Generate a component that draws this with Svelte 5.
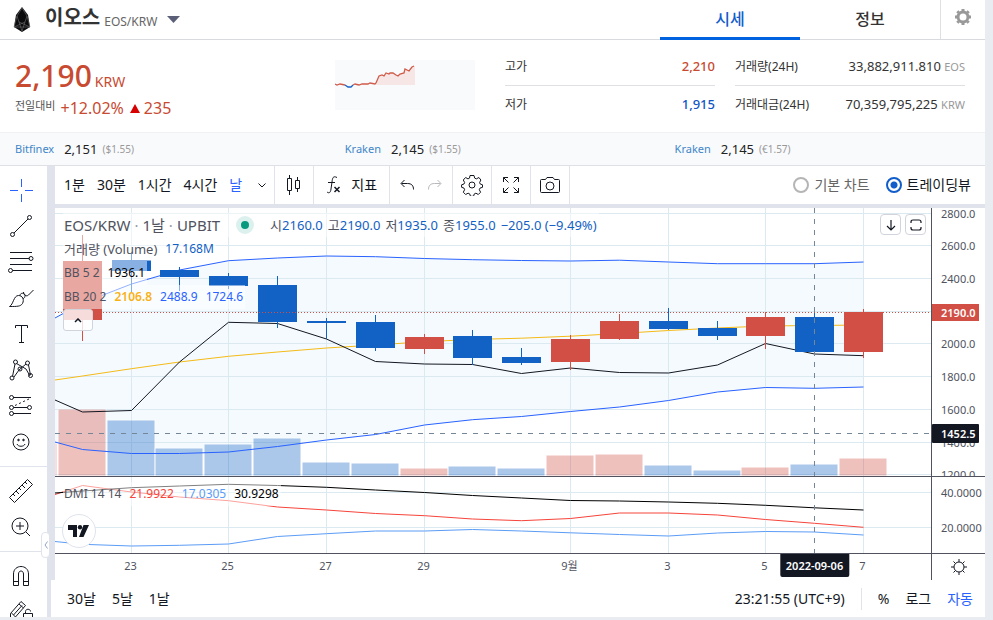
<script>
    const xs = [27.5, 76.5, 124.5, 173.5, 222.5, 271.5, 320.5, 369.5, 417.5, 466.5, 515.5, 564.5, 613.5, 662.5, 710.5, 759.5, 808.5];
    const lineXs = [0, ...xs];
    const paneWidth = 876;

    // direction, body top, body bottom, wick top, wick bottom, volume height
    const candles = [
        ['up', 53, 112, 27, 133, 67],
        ['down', 52, 63, 45, 84, 56],
        ['down', 62, 69, 59, 83, 28],
        ['down', 68, 78, 65, 81, 32],
        ['down', 77, 114, 68, 120, 38],
        ['down', 113, 115, 110, 131, 14],
        ['down', 114, 140, 107, 143, 13],
        ['up', 129, 141, 126, 146, 8],
        ['down', 128, 150, 122, 157, 10],
        ['down', 149, 155, 140, 157, 8],
        ['up', 131, 154, 127, 162, 21],
        ['up', 113, 131, 106, 132, 22],
        ['down', 113, 121, 100, 122, 11],
        ['down', 120, 128, 113, 132, 6],
        ['up', 109, 128, 104, 141, 9],
        ['down', 109, 144, 105, 146, 12],
        ['up', 104, 144, 101, 150, 18]
    ].map(([dir, top, bottom, high, low, volume], i) => ({ dir, top, bottom, high, low, volume, x: xs[i] }));

    const upper = [110, 95, 76, 62, 52.7, 50, 48, 48.7, 50.5, 51.7, 52.5, 53, 52.2, 54, 55.7, 55.7, 55.7, 54];
    const middle = [172, 168, 160.7, 154, 148.3, 144, 140, 137, 133.7, 131.5, 130.2, 128.2, 125.5, 122.5, 120, 118, 117.5, 117];
    const lower = [234, 241.5, 245.5, 245.5, 244, 238.5, 232, 226.5, 217, 211.7, 208.5, 203.5, 199, 192.5, 184, 179.5, 180.3, 179];
    const short = [192, 204, 202.5, 154, 114.3, 115.5, 131, 153.5, 156, 156.5, 165.5, 160, 164.5, 165, 157, 135.5, 146, 147.7];

    const diPlus = [17.5, 8.5, 15, 20, 23.7, 30, 33, 36.5, 38.7, 42, 43.7, 41.5, 36, 36, 38, 42.5, 46.3, 50.3];
    const diMinus = [64.5, 67.3, 69, 68.3, 67, 59.5, 56.7, 54, 54, 52.5, 54, 55.8, 57.5, 59, 56, 54.5, 55, 58];
    const adx = [16, 14, 10.7, 9, 7.3, 8.5, 10.3, 13, 15.5, 18.5, 21, 23.5, 24, 25, 26.3, 28.3, 30.8, 33];

    const prices = [
        [5.5, '2800.0'], [37.5, '2600.0'], [70.5, '2400.0'], [103.5, ''], [135.5, '2000.0'],
        [168.5, '1800.0'], [201.5, '1600.0'], [234.5, '1400.0'], [266.5, '1200.0']
    ];
    const dmiLevels = [[15.5, '40.0000'], [50.5, '20.0000']];
    const dates = [
        [76.5, '23'], [173.5, '25'], [271.5, '27'], [369.5, '29'],
        [515.5, '9월'], [613.5, '3'], [710.5, '5'], [808.5, '7']
    ];

    const exchanges = [
        { name: 'Bitfinex', price: '2,151', foreign: '($1.55)' },
        { name: 'Kraken', price: '2,145', foreign: '($1.55)' },
        { name: 'Kraken', price: '2,145', foreign: '(€1.57)' }
    ];
    const intervals = ['1분', '30분', '1시간', '4시간', '날'];
    const ohlc = [['시', '2160.0'], ['고', '2190.0'], ['저', '1935.0'], ['종', '1955.0']];

    let interval = $state('날');
    let chartType = $state('tradingview');

    const points = (ys) => ys.map((y, i) => `${lineXs[i]},${y}`).join(' ');
    const band = points(upper) + ' ' + points(lower).split(' ').reverse().join(' ');
    const pct = (x) => `${(x / paneWidth) * 100}%`;
</script>

<div class="page">
    <header>
        <button class="coin">
            <svg width="18" height="26" viewBox="0 0 18 26">
                <path d="M9 0 3 8 1 20l8 5 8-5L15 8z" fill="#0b0b0d" />
                <path d="M9 1 4 9l5 15 5-15zM4 9 1 20l11-5M14 9l3 11-11-5M1 20h16" fill="none" stroke="#6d6d70" stroke-width=".6" />
            </svg>
            <strong>이오스</strong>
            <span class="pair">EOS/KRW</span>
            <svg class="caret" width="13" height="7" viewBox="0 0 13 7"><path d="M0 0h13L6.500 7z" fill="#5b6078" /></svg>
        </button>
        <nav>
            <a class="active" href="#price">시세</a>
            <a href="#info">정보</a>
        </nav>
        <button class="settings" aria-label="설정">
            <svg width="18" height="18" viewBox="0 0 18 18">
                <circle cx="9" cy="9" r="5" fill="none" stroke="#999" stroke-width="3" />
                <path d="M9 1v2M9 15v2M1 9h2M15 9h2M3.300 3.300l1.500 1.500M13.200 13.200l1.500 1.500M3.300 14.700l1.500-1.500M13.200 4.800l1.500-1.500" stroke="#999" stroke-width="3" />
            </svg>
        </button>
    </header>

    <section class="summary">
        <div class="now">
            <div class="price">2,190<small>KRW</small></div>
            <div class="change">
                <span>전일대비</span>
                <b>+12.02%</b>
                <svg width="10" height="9" viewBox="0 0 10 9"><path d="M5 0l5 9H0z" fill="#d60000" /></svg>
                <b>235</b>
            </div>
        </div>
        <div class="spark">
            <svg width="80" height="50" viewBox="0 0 80 50">
                <path d="M41 25l3-9h4l3-3h7l4 2 4-1 4-2 1-3 4 2 3-4 2-1v19z" fill="#f6e6e5" />
                <path d="M0 24l2 1 3-1 5 1M18 25l2-1 4 1 3-1h6l2-1 5 1 1-1 3-7 3-1 2 1 2-3 3 1 1-1h3l3 2 2 1 2-2 4-1 1-4 2 1 2 1 3-4 2-1" fill="none" stroke="#d15b4b" stroke-width="1.300" />
                <path d="M10 25l3 2h3l2-2" fill="none" stroke="#1763c7" stroke-width="1.300" />
            </svg>
        </div>
        <dl class="highlow">
            <div><dt>고가</dt><dd class="red">2,210</dd></div>
            <div><dt>저가</dt><dd class="blue">1,915</dd></div>
        </dl>
        <dl class="volume">
            <div><dt>거래량(24H)</dt><dd>33,882,911.810 <i>EOS</i></dd></div>
            <div><dt>거래대금(24H)</dt><dd>70,359,795,225 <i>KRW</i></dd></div>
        </dl>
    </section>

    <section class="exchanges">
        {#each exchanges as item}
            <div><a href="#exchange">{item.name}</a><b>{item.price}</b><span>{item.foreign}</span></div>
        {/each}
    </section>

    <section class="trading">
        <aside>
            <div class="tools">
                <button class="on" aria-label="십자선"><svg viewBox="0 0 28 28"><path d="M14.500 3v8M14.500 18v8M3 14.500h8M18 14.500h8" /></svg></button>
                <button aria-label="추세줄"><svg viewBox="0 0 28 28"><path d="M7 21 21 7" /><circle cx="5.500" cy="22.500" r="2" /><circle cx="22.500" cy="5.500" r="2" /></svg></button>
                <button aria-label="피보나치"><svg viewBox="0 0 28 28"><path d="M3 4.500h22M3 10.500h19.500M3 16.500h22M5.500 22.500H25" /><circle cx="24" cy="10.500" r="2" /><circle cx="3.500" cy="22.500" r="2" /></svg></button>
                <button aria-label="브러쉬"><svg viewBox="0 0 28 28"><path d="M2.500 22.500c4-2 4-11 9-11 4 0 6 4 4 8-2 3-5 3-13 3zM13 11.500c0-3 5-3 5 0s-2 3-2 3M16.500 8c0 3 3 5 5 3l5-5" /></svg></button>
                <button aria-label="글자"><svg viewBox="0 0 28 28"><path d="M8.500 8V5.500h12V8M14.500 5.500v17M12 22.500h5" /></svg></button>
                <button aria-label="패턴"><svg viewBox="0 0 28 28"><path d="M5.500 20.500 8 8M9.500 7.500 19 13l4 7M7 21l5-7 7-6M21.500 9l2 10" /><circle cx="5" cy="22" r="2" /><circle cx="8.500" cy="6" r="2" /><circle cx="13" cy="13" r="2" /><circle cx="20.500" cy="7" r="2" /><circle cx="23.500" cy="19.500" r="2" /></svg></button>
                <button aria-label="예측"><svg viewBox="0 0 28 28"><path d="M6 5.500h18M6.500 15.500h14M6 21.500h18" /><path d="M8 13.500l15-7" stroke-dasharray="2 2.500" /><circle cx="4.500" cy="5.500" r="2" /><circle cx="4.500" cy="15.500" r="2" /><circle cx="4.500" cy="21.500" r="2" /><circle cx="22.500" cy="15.500" r="2" /></svg></button>
                <button aria-label="아이콘"><svg viewBox="0 0 28 28"><circle cx="14" cy="14" r="8" /><path d="M10 16c1 3 7 3 8 0" /><circle cx="11.500" cy="12" r=".8" fill="#131722" /><circle cx="16.500" cy="12" r=".8" fill="#131722" /></svg></button>
                <hr />
                <button aria-label="자"><svg viewBox="0 0 28 28"><path d="M2.500 20.500 20.500 2.500l5 5-18 18zM6 17l2 2M9 14l3 3M12 11l2 2M15 8l3 3M18 5l2 2" /></svg></button>
                <button aria-label="확대"><svg viewBox="0 0 28 28"><circle cx="13" cy="13" r="8" /><path d="M19 19l4 4M13 9v8M9 13h8" /></svg></button>
                <hr />
                <button aria-label="자석"><svg viewBox="0 0 28 28"><path d="M6.500 23.500V12c0-10 15-10 15 0v11.500h-5V12c0-4-5-4-5 0v11.500zM6.500 19.500h5M16.500 19.500h5" /></svg></button>
                <button aria-label="드로잉 모드"><svg viewBox="0 0 28 28"><path d="M3.500 15.500 14 3.500l4.500 4L8 19.500l-4.500 1zM12 6l4.500 4M4.500 15l4 4M6.500 17 15 7.500M18.500 15.500v-2c0-3 5-3 5 0M16.500 15.500h9v6h-9z" /></svg></button>
            </div>
            <button class="handle" aria-label="툴바 숨기기"><svg width="4" height="8" viewBox="0 0 4 8"><path d="M3.500.5 1 4l2.500 3.500" fill="none" stroke="#8fa4c0" /></svg></button>
        </aside>

        <div class="main">
            <div class="toolbar">
                <div class="group intervals">
                    {#each intervals as name}
                        <button class:on={interval === name} onclick={() => (interval = name)}>{name}</button>
                    {/each}
                    <button class="more" aria-label="간격"><svg width="8" height="5" viewBox="0 0 8 5"><path d="M.5.5 4 4 7.500.5" /></svg></button>
                </div>
                <div class="group icon">
                    <button aria-label="캔들"><svg width="16" height="22" viewBox="0 0 16 22"><path d="M3.500 1v3M3.500 17v4M1.500 4.500h4v12h-4zM11.500 3v3M11.500 15v3M9.500 6.500h4v8h-4z" /></svg></button>
                </div>
                <div class="group indicators">
                    <button>
                        <svg width="16" height="20" viewBox="0 0 16 20"><path d="M11 2.500C7 .5 6.500 3 6 7l-1 7c-.5 4-2 4.500-4 3M2 7.500h7" /><path d="M8.500 12l5 5M13.500 12l-5 5" stroke-width="1.500" /></svg>
                        지표
                    </button>
                </div>
                <div class="group history">
                    <button aria-label="되돌리기"><svg width="14" height="12" viewBox="0 0 14 12"><path d="M4.500 1 1 4.500 4.500 8M1.500 4.500h6c4 0 6 2 6 6" /></svg></button>
                    <button aria-label="다시 실행" disabled><svg width="14" height="12" viewBox="0 0 14 12"><path d="M9.500 1 13 4.500 9.500 8M12.500 4.500h-6c-4 0-6 2-6 6" /></svg></button>
                </div>
                <div class="group icon">
                    <button aria-label="차트 설정"><svg width="22" height="22" viewBox="0 0 22 22"><path d="M9 1.500h4l.7 2.600 1.600.8 2.600-1.400 2 2.500-1.300 2.500.6 1.500 2.300.8v2.500l-2.500.8-.7 1.600 1.300 2.500-2.300 2.300-2.400-1.300-1.600.7-.8 2.400H9.500l-.8-2.400-1.600-.7-2.500 1.300-2.300-2.300 1.300-2.500-.6-1.600-2.400-.8v-2.500l2.400-.8.6-1.500-1.300-2.500 2.300-2.500 2.400 1.400 1.500-.8z" /><circle cx="11" cy="11" r="3" /></svg></button>
                </div>
                <div class="group icon">
                    <button aria-label="전체 화면"><svg width="18" height="18" viewBox="0 0 18 18"><path d="M1.500 6V1.500H6M1.500 1.500l5 5M12 1.500h4.500V6M16.500 1.500l-5 5M1.500 12v4.500H6M1.500 16.500l5-5M12 16.500h4.500V12M16.500 16.500l-5-5" /></svg></button>
                </div>
                <div class="group icon">
                    <button aria-label="사진"><svg width="22" height="18" viewBox="0 0 22 18"><path d="M2.500 3.500h4l1.500-2h6l1.500 2h4q1 0 1 1v11q0 1-1 1h-17q-1 0-1-1v-11q0-1 1-1z" /><circle cx="11" cy="10" r="4" /></svg></button>
                </div>
                <div class="types">
                    <label><input type="radio" bind:group={chartType} value="basic" />기본 차트</label>
                    <label><input type="radio" bind:group={chartType} value="tradingview" />트레이딩뷰</label>
                </div>
            </div>

            <div class="chart">
                <div class="pane">
                    <svg width="100%" height="268" viewBox="0 0 876 268" preserveAspectRatio="none">
                        <polygon points={band} fill="#f4fafe" />
                        <g stroke="#dbe9f1">
                            {#each prices as [y]}<line x1="0" x2="876" y1={y} y2={y} />{/each}
                            {#each dates as [x]}<line x1={x} x2={x} y1="0" y2="268" />{/each}
                        </g>
                        <rect class="vol up" x="0" y="235" width="2" height="33" />
                        {#each candles as c}
                            <rect class="vol {c.dir}" x={c.x - 24.5} y={268 - c.volume} width="48" height={c.volume} />
                        {/each}
                        <g fill="none">
                            <polyline points={points(upper)} stroke="#2962ff" />
                            <polyline points={points(lower)} stroke="#2962ff" />
                            <polyline points={points(middle)} stroke="#f5bb17" />
                            <polyline points={points(short)} stroke="#131722" />
                        </g>
                        {#each candles as c}
                            <g class={c.dir}>
                                <rect x={c.x - 0.5} y={c.high} width="1" height={c.low - c.high} />
                                <rect x={c.x - 19.5} y={c.top} width="39" height={c.bottom - c.top} />
                            </g>
                        {/each}
                        <line x1="0" x2="876" y1="104.500" y2="104.500" stroke="#d24f45" stroke-dasharray="1 2" />
                        <path d="M0 225.500h876M759.500 0v268" stroke="#758696" stroke-dasharray="5 6" />
                    </svg>
                    <div class="legend">
                        <div class="row title">EOS/KRW <em>·</em> 1날 <em>·</em> UPBIT <span class="dot"></span>
                            <div class="ohlc">
                                {#each ohlc as [label, value]}<span>{label}<b>{value}</b></span>{/each}
                                <b>−205.0 (−9.49%)</b>
                            </div>
                        </div>
                        <div class="row study">거래량 (Volume) <b>17.168M</b></div>
                        <div class="row">BB 5 2 <b class="black">1936.1</b></div>
                        <div class="row">BB 20 2 <b class="yellow">2106.8</b><b class="bright">2488.9</b><b class="bright">1724.6</b></div>
                        <button class="collapse" aria-label="접기"><svg width="8" height="5" viewBox="0 0 8 5"><path d="M1 4l3-3 3 3" fill="none" stroke="#131722" stroke-width="1.500" /></svg></button>
                    </div>
                    <div class="corner">
                        <button aria-label="아래로"><svg width="12" height="12" viewBox="0 0 12 12"><path d="M6 1v10M2 7l4 4 4-4" /></svg></button>
                        <button aria-label="최대화"><svg width="12" height="12" viewBox="0 0 12 12"><path d="M1 4V3q0-2 2-2h6q2 0 2 2v1M1 8v1q0 2 2 2h6q2 0 2-2V8" /></svg></button>
                    </div>
                </div>
                <div class="scale">
                    <svg width="100%" height="268">
                        {#each prices as [y, label]}<text x="9" y={y + 4}>{label}</text>{/each}
                        <rect y="96" width="47" height="17" fill="#d24f45" />
                        <text class="tag" x="9" y="109">2190.0</text>
                        <rect y="216" width="47" height="19" rx="1" fill="#131722" />
                        <text class="tag" x="9" y="230">1452.5</text>
                    </svg>
                </div>

                <div class="pane">
                    <svg width="100%" height="76" viewBox="0 0 876 76" preserveAspectRatio="none">
                        <g stroke="#dbe9f1">
                            {#each dmiLevels as [y]}<line x1="0" x2="876" y1={y} y2={y} />{/each}
                            {#each dates as [x]}<line x1={x} x2={x} y1="0" y2="76" />{/each}
                        </g>
                        <g fill="none">
                            <polyline points={points(diMinus)} stroke="#5b9cf6" />
                            <polyline points={points(diPlus)} stroke="#f6443a" />
                            <polyline points={points(adx)} stroke="#000" />
                        </g>
                        <path d="M759.500 6v70" stroke="#758696" stroke-dasharray="5 6" />
                    </svg>
                    <div class="legend">
                        <div class="row">DMI 14 14 <b class="plus">21.9922</b><b class="minus">17.0305</b><b class="black">30.9298</b></div>
                    </div>
                    <a class="logo" href="#tradingview" aria-label="TradingView">
                        <svg width="22" height="12" viewBox="0 0 22 12"><path d="M0 0h9v12H5V5H0zM15.500 0H21l-5.500 12H11z" fill="#131722" /><circle cx="12" cy="2.300" r="2.200" fill="#131722" /></svg>
                    </a>
                </div>
                <div class="scale">
                    <svg width="100%" height="76">
                        {#each dmiLevels as [y, label]}<text x="9" y={y + 4}>{label}</text>{/each}
                    </svg>
                </div>

                <div class="times">
                    <svg width="100%" height="26">
                        {#each dates as [x, label]}<text x={pct(x - 1)} y="16" text-anchor="middle">{label}</text>{/each}
                    </svg>
                    <span class="date" style:left={pct(759.5)}>2022-09-06</span>
                </div>
                <button class="scale gear" aria-label="스케일 설정">
                    <svg width="16" height="16" viewBox="0 0 16 16"><circle cx="8" cy="8" r="5" /><path d="M8 0v3M8 13v3M0 8h3M13 8h3M2.500 2.500l2 2M11.500 11.500l2 2M2.500 13.500l2-2M11.500 4.500l2-2" /></svg>
                </button>
            </div>

            <footer>
                <button>30날</button>
                <button>5날</button>
                <button>1날</button>
                <button class="clock">23:21:55 (UTC+9)</button>
                <span class="divider"></span>
                <button>%</button>
                <button>로그</button>
                <button class="on">자동</button>
            </footer>
        </div>
    </section>
</div>

<style>
    :global(body) {
        margin: 0;
        background: #e9ecf1;
    }

    .page {
        margin-right: 8px;
        background: #fff;
        color: #333;
        font: 12px/18px "Noto Sans", "Noto Sans CJK KR", sans-serif;
    }

    button {
        display: flex;
        align-items: center;
        justify-content: center;
        padding: 0;
        border: none;
        background: none;
        color: inherit;
        font: inherit;
        white-space: nowrap;
        cursor: pointer;
    }

    a {
        text-decoration: none;
    }

    b,
    i,
    em {
        font-weight: normal;
        font-style: normal;
    }

    svg {
        display: block;
        flex: none;
    }

    header {
        display: flex;
        height: 39px;
        border-bottom: 1px solid #d8dadd;
    }

    .coin {
        margin-right: auto;
        padding-left: 13px;
    }

    .coin strong {
        margin: -4px 4px 0 14px;
        font-size: 20px;
        font-weight: 600;
    }

    .pair {
        padding-top: 4px;
        font-size: 12px;
        color: #666;
    }

    .caret {
        margin-left: 10px;
    }

    nav {
        display: flex;
        width: 280px;
    }

    nav a {
        flex: 1;
        height: 37px;
        line-height: 38px;
        font-size: 16px;
        font-weight: 500;
        text-align: center;
        color: #333;
    }

    nav .active {
        border-bottom: 3px solid #0062df;
        color: #115dcb;
    }

    .settings {
        width: 45px;
        padding-bottom: 5px;
        border-left: 1px solid #dfe0e5;
    }

    .summary {
        display: flex;
        padding: 8px 20px 0 15px;
        height: 84px;
    }

    .now {
        flex: 1;
        color: #c84a31;
    }

    .price {
        padding-top: 8px;
        font-size: 30px;
        font-weight: 500;
        line-height: 40px;
    }

    .price small {
        margin-left: 3px;
        font-size: 14px;
        font-weight: 400;
    }

    .change {
        display: flex;
        align-items: center;
        margin-top: -3px;
        font-size: 16px;
    }

    .change span {
        margin: -4px 5px 0 0;
        font-size: 11px;
        color: #555;
    }

    .change svg {
        margin: 0 4px 0 6px;
    }

    .spark {
        width: 140px;
        height: 50px;
        margin: 12px 30px 0 0;
        background: #f9fafc;
    }

    dl {
        width: 210px;
        margin: 0;
    }

    dl div {
        display: flex;
        justify-content: space-between;
        height: 37px;
        line-height: 37px;
    }

    dl div:first-child {
        border-bottom: 1px solid #dfe0e5;
    }

    dt {
        font-size: 12px;
    }

    dd {
        margin: 0;
        font-size: 13px;
    }

    dd i {
        font-size: 11px;
        color: #999;
    }

    .highlow {
        margin-right: 20px;
    }

    .highlow dd {
        font-weight: 500;
    }

    .volume {
        width: 230px;
    }

    .red {
        color: #c84a31;
    }

    .blue {
        color: #1256c4;
    }

    .exchanges {
        display: grid;
        grid-template-columns: 34% 34% 32%;
        height: 32px;
        padding-left: 15px;
        border-top: 1px solid #f1f1f4;
        border-bottom: 1px solid #dfe0e5;
        background: #f9fafc;
    }

    .exchanges div {
        display: flex;
        align-items: center;
    }

    .exchanges a {
        font-size: 11px;
        color: #3f86c9;
    }

    .exchanges b {
        margin: 0 5px 0 10px;
        font-size: 13px;
        color: #222;
    }

    .exchanges span {
        font-size: 10px;
        color: #999;
    }

    .trading {
        display: flex;
        color: #131722;
    }

    aside {
        position: relative;
        flex: none;
        display: flex;
        width: 47px;
        border-right: 4px solid #e0e3eb;
    }

    .tools {
        contain: size;
        width: 47px;
        overflow: hidden;
        padding-top: 6px;
        box-sizing: border-box;
    }

    .tools button {
        width: 42px;
        height: 36px;
    }

    .tools svg {
        width: 28px;
        height: 28px;
        fill: none;
        stroke: #131722;
    }

    .tools .on svg {
        stroke: #2962ff;
    }

    .tools hr {
        height: 1px;
        margin: 6px 0;
        border: none;
        background: #e0e3eb;
    }

    .handle {
        position: absolute;
        top: 366px;
        right: -3px;
        width: 9px;
        height: 26px;
        border: 1px solid #e0e3eb;
        border-radius: 4px;
        background: #fff;
    }

    .main {
        flex: 1;
        min-width: 0;
    }

    .toolbar {
        display: flex;
        height: 38px;
        border-left: 4px solid #e0e3eb;
        border-bottom: 4px solid #e0e3eb;
        font-size: 14px;
    }

    .toolbar svg {
        fill: none;
        stroke: #131722;
    }

    .group {
        display: flex;
        align-items: stretch;
        border-right: 1px solid #e0e3eb;
    }

    .icon button {
        width: 38px;
    }

    .intervals {
        gap: 12px;
        padding: 0 4px 0 9px;
    }

    .more {
        width: 16px;
    }

    .on {
        color: #2962ff;
    }

    .indicators button {
        gap: 9px;
        width: 75px;
    }

    .history {
        gap: 14px;
        padding: 0 10px;
    }

    .history button:disabled {
        opacity: 0.3;
    }

    .types {
        display: flex;
        align-items: center;
        gap: 16px;
        margin-left: auto;
        padding-right: 14px;
        white-space: nowrap;
    }

    .types label {
        display: flex;
        align-items: center;
        gap: 5px;
    }

    .types label:first-child {
        color: #666;
    }

    .types input {
        appearance: none;
        width: 16px;
        height: 16px;
        margin: 0;
        border: 2px solid #b5b5b5;
        border-radius: 50%;
    }

    .types input:checked {
        border-color: #115dcb;
        background: radial-gradient(circle, #115dcb 3px, #fff 4px);
    }

    .chart {
        display: grid;
        grid-template-columns: 1fr 54px;
        border-left: 4px solid #e0e3eb;
    }

    .pane,
    .scale {
        position: relative;
        border-bottom: 1px solid #50535e;
    }

    .scale {
        border-left: 1px solid #50535e;
    }

    .chart text {
        font-size: 11px;
        fill: #50535e;
    }

    .chart text.tag {
        fill: #fff;
        font-weight: 600;
    }

    .up {
        fill: #d24f45;
    }

    .down {
        fill: #1261c4;
    }

    .vol {
        opacity: 0.35;
        stroke: #fff;
        stroke-width: 1;
    }

    .legend {
        position: absolute;
        top: 5px;
        left: 8px;
        display: flex;
        flex-direction: column;
        align-items: flex-start;
        font-size: 12px;
        line-height: 24px;
        color: #50535e;
    }

    .row {
        display: flex;
        gap: 8px;
        padding: 0 2px 0 1px;
        background: rgba(255, 255, 255, 0.5);
        white-space: nowrap;
    }

    .row b {
        color: #1261c4;
    }

    .row .black {
        color: #000;
    }

    .row .yellow {
        color: #f9b116;
        font-weight: 600;
    }

    .row .bright {
        color: #2962ff;
    }

    .row .plus {
        color: #f6443a;
    }

    .row .minus {
        color: #5b9cf6;
    }

    .study {
        font-size: 13px;
    }

    .study b {
        font-size: 12px;
    }

    .title {
        align-items: center;
        gap: 4px;
        font-size: 15px;
    }

    .title em {
        color: #9598a1;
    }

    .dot {
        width: 8px;
        height: 8px;
        margin: 0 12px;
        border: 5px solid #dcf0ee;
        border-radius: 50%;
        background: #089981;
    }

    .ohlc {
        display: flex;
        gap: 5px;
        font-size: 13px;
    }

    .collapse {
        width: 30px;
        height: 22px;
        border: 1px solid #d1d4dc;
        border-radius: 3px;
        background: rgba(255, 255, 255, 0.8);
    }

    .corner {
        position: absolute;
        top: 6px;
        right: 5px;
        display: flex;
        gap: 4px;
    }

    .corner button {
        width: 21px;
        height: 21px;
        border: 1px solid #d1d4dc;
        border-radius: 4px;
        background: #fff;
    }

    .corner svg {
        fill: none;
        stroke: #131722;
        stroke-width: 1.2;
    }

    .logo {
        position: absolute;
        left: 7px;
        bottom: 5px;
        display: flex;
        align-items: center;
        justify-content: center;
        width: 32px;
        height: 32px;
        border: 1px solid #e0e3eb;
        border-radius: 50%;
        background: #fff;
    }

    .times {
        position: relative;
        height: 26px;
    }

    .date {
        position: absolute;
        top: 0;
        transform: translateX(-50%);
        padding: 0 6px;
        background: #131722;
        border-radius: 0 0 2px 2px;
        color: #fff;
        font-size: 11px;
        font-weight: 600;
        line-height: 23px;
        white-space: nowrap;
    }

    .gear {
        border-bottom: none;
        border-left: 1px solid #50535e;
    }

    .gear svg {
        fill: none;
        stroke: #131722;
    }

    footer {
        display: flex;
        align-items: center;
        gap: 16px;
        height: 37px;
        padding: 0 12px 0 16px;
        font-size: 14px;
    }

    .clock {
        margin-left: auto;
    }

    .divider {
        width: 1px;
        height: 22px;
        background: #e0e3eb;
    }
</style>
